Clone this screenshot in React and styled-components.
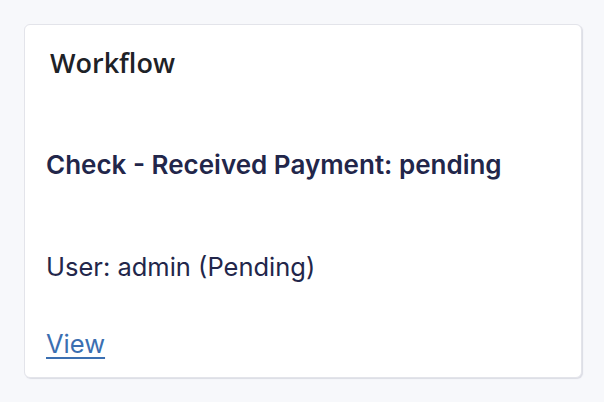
import React from 'react';
import styled, { createGlobalStyle } from 'styled-components';

const GlobalStyle = createGlobalStyle`
  html, body {
    margin: 0;
    padding: 0;
    background: #f7f8fb;
  }
  body {
    font-family: 'Inter', 'Liberation Sans', sans-serif;
  }
`;

const Page = styled.div`
  width: 604px;
  height: 402px;
  box-sizing: border-box;
  padding: 24px 22px 24px 24px;
`;

const Card = styled.div`
  box-sizing: border-box;
  height: 354px;
  background: #ffffff;
  border: 1px solid #e3e4ea;
  border-radius: 6px;
  box-shadow: 1px 1px 1px rgba(200, 202, 214, 0.6);
  display: flex;
  flex-direction: column;
`;

const Header = styled.div`
  padding: 23px 25px 0;
`;

const Title = styled.h3`
  margin: 0;
  font-family: 'Open Sans', 'Noto Sans', sans-serif;
  font-size: 27px;
  font-weight: 600;
  line-height: 30px;
  color: #1e2227;
`;

const Body = styled.div`
  padding: 0 21px;
  display: flex;
  flex-direction: column;
  color: #22264a;
`;

const Summary = styled.p`
  margin: 71px 0 0;
  font-size: 26px;
  font-weight: 600;
  line-height: 32px;
`;

const Meta = styled.p`
  margin: 70px 0 0;
  font-size: 25.5px;
  font-weight: 400;
  line-height: 32px;
`;

const ViewLink = styled.a`
  margin-top: 45px;
  align-self: flex-start;
  font-size: 25.5px;
  line-height: 32px;
  color: #3b6fb1;
  text-decoration: underline;
  text-decoration-thickness: 2px;
  text-underline-offset: 4px;
`;

export default function App() {
  return (
    <>
      <GlobalStyle />
      <Page>
        <Card>
          <Header>
            <Title>Workflow</Title>
          </Header>
          <Body>
            <Summary>Check - Received Payment: pending</Summary>
            <Meta>User: admin (Pending)</Meta>
            <ViewLink href="#">View</ViewLink>
          </Body>
        </Card>
      </Page>
    </>
  );
}
